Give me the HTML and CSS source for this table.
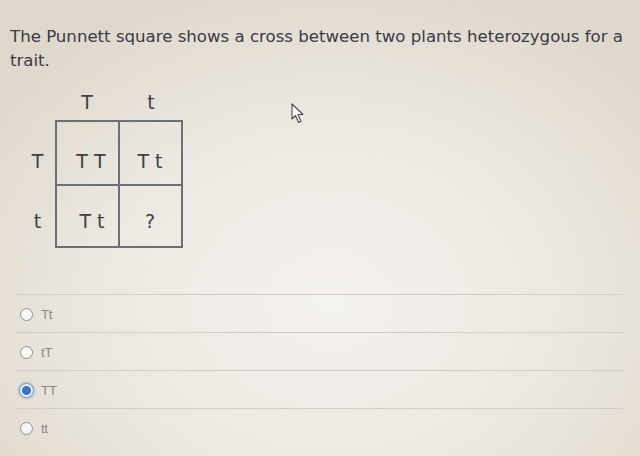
FILE: index.html
```html
<!DOCTYPE html>
<html>
<head>
<meta charset="utf-8">
<link rel="stylesheet" href="styles.css">
</head>
<body>
<div class="page">
  <p class="question">The Punnett square shows a cross between two plants heterozygous for a trait.</p>
  <div class="punnett">
    <div class="corner"></div>
    <div class="head">T</div>
    <div class="head">t</div>
    <div class="side">T</div>
    <div class="cell c1">T T</div>
    <div class="cell c2">T t</div>
    <div class="side">t</div>
    <div class="cell c3">T t</div>
    <div class="cell c4">?</div>
  </div>
  <ul class="options">
    <li class="opt"><span class="radio"></span><span class="label">Tt</span></li>
    <li class="opt"><span class="radio"></span><span class="label">tT</span></li>
    <li class="opt"><span class="radio on"></span><span class="label">TT</span></li>
    <li class="opt"><span class="radio"></span><span class="label">tt</span></li>
  </ul>
  <svg class="cursor" width="14" height="21" viewBox="0 0 14 21">
    <path d="M1 1 L1 16 L4.5 12.5 L7.5 19.5 L10 18.5 L7 11.5 L12 11.5 Z" fill="#fafafa" stroke="#4a4a52" stroke-width="1.1" stroke-linejoin="round"/>
  </svg>
</div>
</body>
</html>
```

FILE: styles.css
```css
html, body {
  margin: 0;
  padding: 0;
  height: 100%;
}
body {
  background: radial-gradient(ellipse 420px 330px at 330px 300px, #f4f2ee 0%, #ece8e1 55%, #dfd8cc 100%);
  overflow: hidden;
}
.page {
  position: relative;
  width: 640px;
  height: 456px;
}
.question {
  margin: 0;
  width: 618px;
  padding: 25px 0 0 10px;
  font-family: "DejaVu Sans", sans-serif;
  font-size: 16.6px;
  line-height: 24px;
  color: #3a3a46;
}
.punnett {
  display: grid;
  grid-template-columns: 35px 64px 64px;
  grid-template-rows: 32px 65px 63px;
  margin: 15px 0 0 20px;
  width: max-content;
  font-family: "DejaVu Sans", sans-serif;
  font-size: 19px;
  color: #3e3e48;
}
.head {
  display: flex;
  align-items: center;
  justify-content: center;
  padding-bottom: 4px;
}
.side {
  display: flex;
  align-items: center;
  justify-content: center;
  padding-top: 16px;
}
.side:nth-of-type(7) { padding-top: 8px; }
.cell {
  display: flex;
  align-items: center;
  justify-content: center;
  border: 1px solid #6e6e78;
  padding-top: 16px;
  letter-spacing: 1px;
  word-spacing: -2px;
}
.c1 { border-width: 2px 1px 1px 2px; padding-left: 8px; }
.c2 { border-width: 2px 2px 1px 1px; }
.c3 { border-width: 1px 1px 2px 2px; padding-top: 10px; padding-left: 10px; }
.c4 { border-width: 1px 2px 2px 1px; padding-top: 10px; }
.options {
  list-style: none;
  margin: 46px 0 0 15px;
  padding: 0;
  width: 608px;
}
.opt {
  display: flex;
  align-items: center;
  gap: 8px;
  height: 38px;
  border-top: 1px solid #d2cec7;
  padding-left: 5px;
  box-sizing: border-box;
  padding-top: 1px;
}
.radio {
  width: 11px;
  height: 11px;
  border: 1px solid #8e8e92;
  border-radius: 50%;
  background: #f8f8f6;
  box-sizing: content-box;
}
.radio.on {
  background: #3b74b8;
  border: 2px solid #eef2f8;
  width: 9px;
  height: 9px;
  box-shadow: 0 0 0 1px #7aa0cc, 0 0 2px 2px rgba(120,160,210,0.45);
}
.label {
  font-family: "Liberation Sans", Arial, sans-serif;
  font-size: 13.5px;
  color: #8a8a8e;
  letter-spacing: -0.5px;
}
.cursor {
  position: absolute;
  left: 291px;
  top: 103px;
}
```
